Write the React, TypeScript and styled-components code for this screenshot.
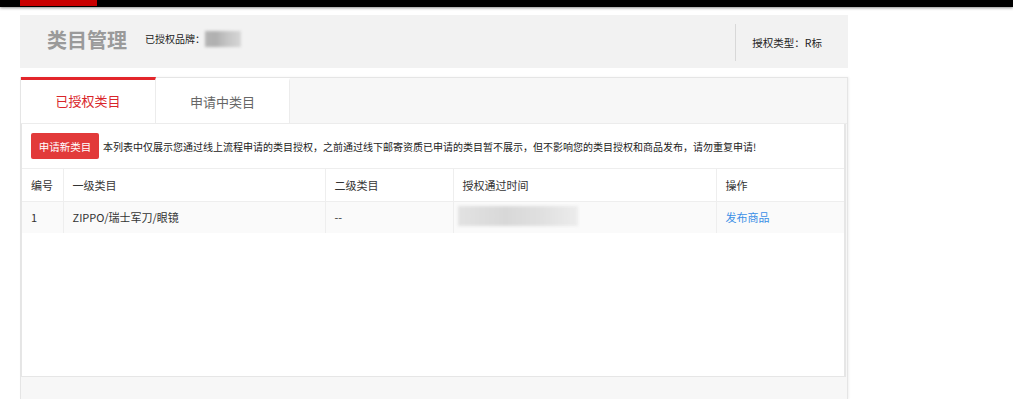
import React from "react";
import styled, { createGlobalStyle } from "styled-components";

const GlobalStyle = createGlobalStyle`
  html, body { margin: 0; padding: 0; background: #fff; }
  body {
    font-family: "Noto Sans CJK SC", "Microsoft YaHei", sans-serif;
    font-size: 12px;
    color: #333;
  }
  * { box-sizing: border-box; }
`;

const TopBar = styled.div`
  height: 7px;
  background: #000;
  box-shadow: 0 1px 3px rgba(0, 0, 0, 0.45);
  padding-left: 20px;
`;

const RedMark = styled.div`
  width: 77px;
  height: 6px;
  background: #c80000;
`;

const Page = styled.div`
  width: 828px;
  margin-left: 20px;
  padding-top: 8px;
`;

const Header = styled.div`
  height: 53px;
  background: #f2f2f2;
  display: flex;
  align-items: center;
  padding-left: 27px;
`;

const Title = styled.h1`
  margin: -3px 0 0 0;
  font-size: 20px;
  font-weight: bold;
  color: #9a9a9a;
  line-height: 1;
`;

const Brand = styled.div`
  margin-left: 18px;
  display: flex;
  align-items: center;
  font-size: 10px;
  color: #222;
  margin-top: -6px;
`;

const Blur = styled.span<{ $w: number; $h: number; $light?: boolean }>`
  display: inline-block;
  width: ${(p) => p.$w}px;
  height: ${(p) => p.$h}px;
  background: ${(p) =>
    p.$light
      ? "linear-gradient(90deg, #e2e2e2, #d8d8d8 40%, #e0e0e0 70%, #ececec)"
      : "linear-gradient(90deg, #b4b4b4, #b0b0b0 30%, #c4c4c4 60%, #d6d6d6)"};
  filter: blur(1.5px);
`;

const TypeBox = styled.div`
  margin-left: auto;
  height: 37px;
  border-left: 1px solid #d8d8d8;
  padding: 0 26px 0 16px;
  display: flex;
  align-items: center;
  font-size: 10.5px;
  color: #222;
  margin-top: 2px;
`;

const Panel = styled.div`
  margin-top: 9px;
  border: 1px solid #e5e5e5;
  border-bottom: none;
  background: #f7f7f7;
  height: 322px;
  display: flex;
  flex-direction: column;
  box-shadow: 1px 0 2px rgba(0, 0, 0, 0.06);
`;

const TabBar = styled.div`
  height: 46px;
  display: flex;
  border-bottom: 1px solid #ececec;
`;

const Tab = styled.div<{ $active?: boolean; $w: number }>`
  width: ${(p) => p.$w}px;
  background: #fff;
  border-top: 3px solid ${(p) => (p.$active ? "#e3262b" : "transparent")};
  border-right: 1px solid #ececec;
  margin-top: ${(p) => (p.$active ? "-1px" : "0")};
  display: flex;
  align-items: center;
  justify-content: center;
  font-size: 13px;
  color: ${(p) => (p.$active ? "#d9252a" : "#666")};
  padding-bottom: 2px;
`;

const Content = styled.div`
  margin: 0 1px 0 0;
  height: 253px;
  background: #fff;
  border-left: 1px solid #e6e6e6;
  border-right: 2px solid #e6e6e6;
  border-bottom: 1px solid #e6e6e6;
  display: flex;
  flex-direction: column;
`;

const Toolbar = styled.div`
  display: flex;
  align-items: center;
  padding: 9px 9px 9px 9px;
  border-bottom: 1px solid #eee;
`;

const Button = styled.button`
  width: 68px;
  height: 26px;
  padding: 0;
  border: none;
  border-radius: 2px;
  background: #e23a3a;
  color: #fff;
  font-family: inherit;
  font-size: 10.5px;
  cursor: pointer;
`;

const Notice = styled.span`
  margin-left: 4px;
  font-size: 10px;
  color: #222;
`;

const Table = styled.table`
  width: 100%;
  border-collapse: collapse;
  table-layout: fixed;
`;

const Th = styled.th<{ $w?: number }>`
  ${(p) => (p.$w ? `width: ${p.$w}px;` : "")}
  height: 32px;
  text-align: left;
  font-weight: normal;
  padding: 0 9px;
  color: #333;
  font-size: 11px;
  white-space: nowrap;
  border-left: 1px solid #eee;
  border-bottom: 1px solid #eee;
  &:first-child { border-left: none; }
`;

const Td = styled.td`
  height: 32px;
  padding: 0 9px;
  background: #fafafa;
  color: #333;
  font-size: 11px;
  white-space: nowrap;
  border-left: 1px solid #eee;
  &:first-child { border-left: none; }
`;

const BlurCell = styled(Td)`
  padding: 0 4px;
`;

const Link = styled.a`
  color: #3a8fe6;
  text-decoration: none;
`;

const Footer = styled.div`
  flex: 1;
`;

export default function App() {
  return (
    <>
      <GlobalStyle />
      <TopBar>
        <RedMark />
      </TopBar>
      <Page>
        <Header>
          <Title>类目管理</Title>
          <Brand>
            已授权品牌：<Blur $w={36} $h={16} />
          </Brand>
          <TypeBox>授权类型：R标</TypeBox>
        </Header>
        <Panel>
          <TabBar>
            <Tab $active $w={135}>已授权类目</Tab>
            <Tab $w={134}>申请中类目</Tab>
          </TabBar>
          <Content>
            <Toolbar>
              <Button>申请新类目</Button>
              <Notice>
                本列表中仅展示您通过线上流程申请的类目授权，之前通过线下邮寄资质已申请的类目暂不展示，但不影响您的类目授权和商品发布，请勿重复申请!
              </Notice>
            </Toolbar>
            <Table>
              <thead>
                <tr>
                  <Th $w={41}>编号</Th>
                  <Th $w={262}>一级类目</Th>
                  <Th $w={128}>二级类目</Th>
                  <Th $w={263}>授权通过时间</Th>
                  <Th>操作</Th>
                </tr>
              </thead>
              <tbody>
                <tr>
                  <Td>1</Td>
                  <Td>ZIPPO/瑞士军刀/眼镜</Td>
                  <Td>--</Td>
                  <BlurCell>
                    <Blur $light $w={120} $h={20} />
                  </BlurCell>
                  <Td>
                    <Link href="#">发布商品</Link>
                  </Td>
                </tr>
              </tbody>
            </Table>
            <Footer />
          </Content>
        </Panel>
      </Page>
    </>
  );
}
